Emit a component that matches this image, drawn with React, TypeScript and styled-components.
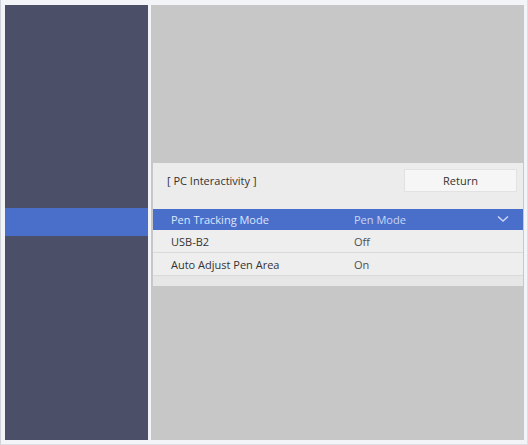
import styled, { createGlobalStyle } from "styled-components"

const GlobalStyle = createGlobalStyle`
  html, body {
    margin: 0;
    padding: 0;
    background: #ffffff;
  }
  body {
    font-family: "Open Sans", "Noto Sans", "Liberation Sans", sans-serif;
  }
`

interface Setting {
  label: string
  value: string
  dropdown?: boolean
}

const SETTINGS: Setting[] = [
  { label: "Pen Tracking Mode", value: "Pen Mode", dropdown: true },
  { label: "USB-B2", value: "Off" },
  { label: "Auto Adjust Pen Area", value: "On" },
]

const Chevron = () => (
  <svg width="12" height="8" viewBox="0 0 12 8" fill="none">
    <path d="M1 1.5 L6 6 L11 1.5" stroke="#cfd8f5" strokeWidth="1.4" />
  </svg>
)

export default function App() {
  return (
    <>
      <GlobalStyle />
      <Screen>
        <Sidebar>
          <SideItem $active />
        </Sidebar>
        <Main>
          <Panel>
            <PanelHeader>
              <PanelTitle>[ PC Interactivity ]</PanelTitle>
              <ReturnButton>Return</ReturnButton>
            </PanelHeader>
            {SETTINGS.map((s, i) => (
              <Row key={s.label} $active={i === 0}>
                <Label>{s.label}</Label>
                <Value>{s.value}</Value>
                {s.dropdown && <Chevron />}
              </Row>
            ))}
            <PanelFooter />
          </Panel>
        </Main>
      </Screen>
    </>
  )
}

const Screen = styled.div`
  width: 528px;
  height: 445px;
  box-sizing: border-box;
  padding: 5px 3px 4px 4px;
  background: #f3f4f7;
  display: grid;
  grid-template-columns: 143px 1fr;
  column-gap: 3px;
  border-left: 1px solid #cfd2d9;
  border-right: 1px solid #dcdee3;
  border-bottom: 1px solid #dcdee3;
`

const Sidebar = styled.div`
  background: #4b5068;
  display: flex;
  flex-direction: column;
  padding-top: 203px;
`

const SideItem = styled.div<{ $active?: boolean }>`
  height: 28px;
  background: ${(p) => (p.$active ? "#4a6fcb" : "transparent")};
`

const Main = styled.div`
  background: #c7c7c7;
  padding: 158px 1px 0 2px;
  display: flex;
  flex-direction: column;
`

const Panel = styled.div`
  background: #ebebeb;
  display: flex;
  flex-direction: column;
`

const PanelHeader = styled.div`
  height: 46px;
  display: flex;
  align-items: center;
  justify-content: space-between;
  padding: 0 6px 12px 14px;
  box-sizing: border-box;
  background: #ececec;
`

const PanelTitle = styled.span`
  font-size: 11px;
  color: #333;
`

const ReturnButton = styled.div`
  width: 113px;
  height: 23px;
  display: flex;
  align-items: center;
  justify-content: center;
  font-size: 11px;
  color: #333;
  background: #f6f6f6;
  border: 1px solid #e2e2e2;
  box-sizing: border-box;
`

const Row = styled.div<{ $active?: boolean }>`
  height: ${(p) => (p.$active ? "20px" : "22px")};
  display: flex;
  align-items: center;
  padding: 0 14px 0 18px;
  background: ${(p) => (p.$active ? "#4a6fcb" : "#eeeeee")};
  border-bottom: 1px solid ${(p) => (p.$active ? "#4a6fcb" : "#dadada")};
  color: ${(p) => (p.$active ? "#dfe6fb" : "#333")};
  font-size: 11px;
`

const Label = styled.span`
  width: 183px;
`

const Value = styled.span`
  flex: 1;
  opacity: 0.85;
`

const PanelFooter = styled.div`
  height: 10px;
  background: #e6e6e6;
`
